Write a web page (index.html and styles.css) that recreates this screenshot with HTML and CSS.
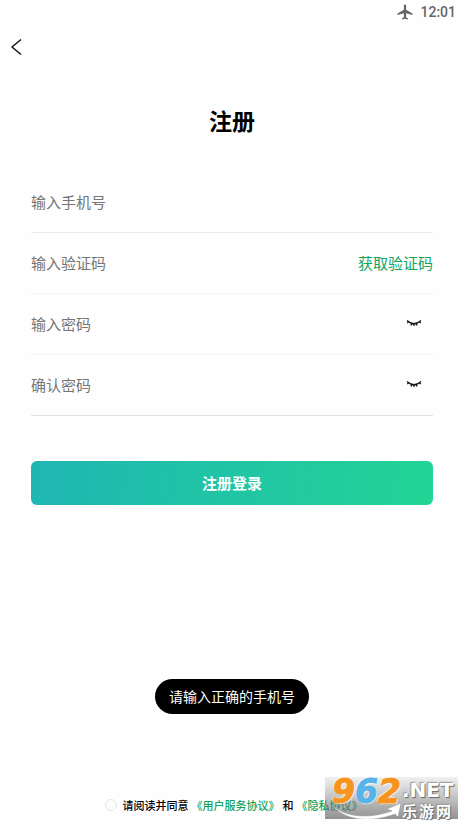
FILE: index.html
```html
<!DOCTYPE html>
<html lang="zh-CN">
<head>
  <meta charset="utf-8">
  <meta name="viewport" content="width=device-width, initial-scale=1">
  <title>注册</title>
  <link rel="stylesheet" href="styles.css">
</head>
<body>
  <div class="page">
    <header class="status">
      <svg class="plane" viewBox="0 0 24 24" aria-hidden="true"><path d="M22 16v-2l-8.500-5V3.500C13.500 2.670 12.830 2 12 2s-1.500.67-1.500 1.500V9L2 14v2l8.500-2.500V19L8 20.500V22l4-1 4 1v-1.500L13.500 19v-5.500z"/></svg>
      <span>12:01</span>
    </header>
    <nav class="nav">
      <button class="back" type="button" aria-label="返回">
        <svg viewBox="0 0 12 18" aria-hidden="true"><path d="M11 1.500 2 9l9 7.500"/></svg>
      </button>
    </nav>

    <main class="content">
      <h1 class="title">注册</h1>
      <form id="register">
        <div class="field">
          <input type="tel" placeholder="输入手机号" aria-label="输入手机号">
        </div>
        <div class="field light">
          <input type="text" placeholder="输入验证码" aria-label="输入验证码">
          <button class="code" type="button">获取验证码</button>
        </div>
        <div class="field light">
          <input type="password" placeholder="输入密码" aria-label="输入密码">
          <button class="eye" type="button" aria-label="显示密码">
            <svg viewBox="0 0 16 8" aria-hidden="true"><path d="M1 1.500Q8 8 15 1.500M2.800 2.800 1.200 4M5.700 4.500 5 6.500M8 4.800V7M10.300 4.500l.7 2M13.200 2.800 14.800 4"/></svg>
          </button>
        </div>
        <div class="field strong">
          <input type="password" placeholder="确认密码" aria-label="确认密码">
          <button class="eye" type="button" aria-label="显示密码">
            <svg viewBox="0 0 16 8" aria-hidden="true"><path d="M1 1.500Q8 8 15 1.500M2.800 2.800 1.200 4M5.700 4.500 5 6.500M8 4.800V7M10.300 4.500l.7 2M13.200 2.800 14.800 4"/></svg>
          </button>
        </div>
        <button class="submit" type="submit">注册登录</button>
      </form>
    </main>

    <footer class="terms">
      <input id="agree" type="checkbox">
      <label for="agree">请阅读并同意</label>
      <a href="#service">《用户服务协议》</a>
      <span>和</span>
      <a href="#privacy">《隐私协议》</a>
    </footer>

    <div class="toast" role="status">请输入正确的手机号</div>

    <div class="mark">
      <svg class="swoosh" viewBox="0 0 133 42" aria-hidden="true"><path d="M7 28C22 42 47 41 67 34L62 32 76 26 73 40 70 37C46 46 20 44 7 28Z"/></svg>
      <div class="digits"><span>9</span><span class="blue">6</span><span>2</span></div>
      <div class="names">
        <span class="net">.NET</span>
        <span class="cn"><span>乐</span><span>游</span><span>网</span></span>
      </div>
    </div>
  </div>
</body>
</html>
```
FILE: styles.css
```css
* {
  box-sizing: border-box;
}

body {
  margin: 0;
  background: #fefefe;
  color: #000;
  font-family: "Noto Sans CJK SC", sans-serif;
}

button,
input {
  font: inherit;
  border: 0;
  padding: 0;
  background: none;
}

svg {
  display: block;
}

.page {
  position: relative;
  display: flex;
  flex-direction: column;
  min-height: 100vh;
}

.status {
  display: flex;
  align-items: center;
  justify-content: flex-end;
  gap: 6px;
  height: 24px;
  padding-right: 8px;
  color: #666;
  font: 500 14px/24px Roboto, sans-serif;
}

.plane {
  width: 18px;
  height: 18px;
  fill: #666;
}

.nav {
  display: flex;
  align-items: center;
  height: 46px;
  padding-left: 10px;
}

.back svg {
  width: 12px;
  height: 18px;
  fill: none;
  stroke: #111;
  stroke-width: 1.4;
}

.content {
  flex: 1;
  padding: 32px 31px 0;
}

.title {
  margin: 0 0 34px;
  font-size: 23px;
  font-weight: 700;
  line-height: 36px;
  text-align: center;
}

.field {
  display: flex;
  align-items: center;
  height: 61px;
  padding-bottom: 2px;
  border-bottom: 1px solid #ebebeb;
  font-size: 15px;
}

.field.light {
  border-color: #f4f4f4;
}

.field.strong {
  border-color: #e2e2e2;
}

.field input {
  flex: 1;
  min-width: 0;
  height: 40px;
  outline: 0;
}

.field input::placeholder {
  color: #757575;
  opacity: 1;
}

.code {
  color: #12a45e;
}

.eye {
  margin-right: 11px;
}

.eye svg {
  width: 16px;
  height: 8px;
  fill: none;
  stroke: #1a1515;
  stroke-width: 1.3;
}

.submit {
  display: block;
  width: 100%;
  height: 44px;
  margin-top: 45px;
  padding-bottom: 1px;
  border-radius: 6px;
  background: linear-gradient(100deg, #1fb6b3, #22d495);
  color: #fff;
  font-size: 15px;
  font-weight: 700;
}

.terms {
  display: flex;
  align-items: center;
  justify-content: center;
  gap: 3px;
  height: 20px;
  margin-bottom: 10px;
  padding-left: 3px;
  font-size: 11px;
  font-weight: 500;
  line-height: 20px;
  white-space: nowrap;
}

.terms input {
  appearance: none;
  width: 12px;
  height: 12px;
  margin: 0 3px 0 0;
  border: 1px solid #e6e6e6;
  border-radius: 50%;
}

.terms a {
  color: #12a45e;
  text-decoration: none;
}

.toast {
  position: absolute;
  bottom: 111px;
  left: 50%;
  transform: translateX(-50%);
  padding: 0 14px;
  border-radius: 18px;
  background: #000;
  color: #fff;
  font-size: 14px;
  line-height: 35px;
  white-space: nowrap;
}

.mark {
  position: absolute;
  right: 6px;
  bottom: 6px;
  display: flex;
  width: 133px;
  height: 42px;
  padding-left: 7px;
  background: linear-gradient(rgba(120, 120, 120, 0.1), rgba(110, 110, 110, 0.75));
  color: #fff;
  white-space: nowrap;
}

.swoosh {
  position: absolute;
  inset: 0;
  width: 133px;
  height: 42px;
  fill: #fff;
  stroke: #999;
  stroke-width: 0.5;
}

.digits {
  position: relative;
  width: 70px;
  color: #f79420;
  font: italic 700 33px/30px "DejaVu Sans", sans-serif;
  -webkit-text-stroke: 1px currentColor;
  text-shadow: 1px 1px 1px #fff, -1px -1px 1px #fff;
}

.digits .blue {
  color: #58b4e8;
}

.names {
  position: relative;
  display: flex;
  flex-direction: column;
  gap: 3px;
  padding-top: 3px;
  text-shadow: 1px 1px 1px #666, -1px -1px 1px #999;
}

.net {
  font: 700 20px/20px "DejaVu Sans", sans-serif;
}

.cn {
  display: flex;
  gap: 2px;
  font-size: 15px;
  font-weight: 700;
  line-height: 15px;
}
```
